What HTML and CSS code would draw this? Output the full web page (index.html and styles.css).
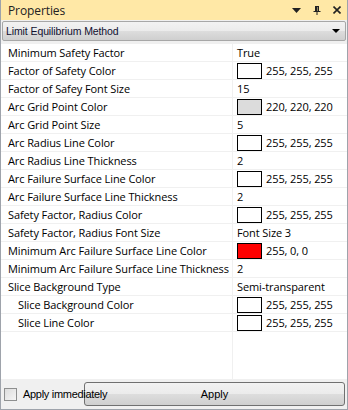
FILE: index.html
```html
<!DOCTYPE html>
<html lang="en">
<head>
    <meta charset="UTF-8">
    <title>Properties</title>
    <link rel="stylesheet" href="styles.css">
</head>
<body>
    <div class="panel">
        <!-- Title bar -->
        <div class="titlebar">
            <span class="title">Properties</span>
            <span class="tools">
                <svg width="9" height="5" viewBox="0 0 9 5"><path d="M0 0h9L4.5 5z" fill="#222"/></svg>
                <svg width="8" height="9" viewBox="0 0 8 9"><path d="M2 0.5h4M2.5 0.5v5M5.5 0.5v5M0.5 5.5h7M4 5.5v3.5" stroke="#222" fill="none"/><path d="M3 1h1.5v4H3z" fill="#222"/></svg>
                <svg width="8" height="8" viewBox="0 0 8 8"><path d="M0.5 0.5l7 7M7.5 0.5l-7 7" stroke="#222" stroke-width="1.6"/></svg>
            </span>
        </div>

        <!-- Object selector -->
        <div class="combo">
            <span>Limit Equilibrium Method</span>
            <svg width="8" height="4" viewBox="0 0 8 4"><path d="M0 0h8L4 4z" fill="#000"/></svg>
        </div>

        <!-- Property grid -->
        <div class="grid">
            <div class="row"><div class="name">Minimum Safety Factor</div><div class="value">True</div></div>
            <div class="row"><div class="name">Factor of Safety Color</div><div class="value"><span class="swatch"></span>255, 255, 255</div></div>
            <div class="row"><div class="name">Factor of Safey Font Size</div><div class="value">15</div></div>
            <div class="row"><div class="name">Arc Grid Point Color</div><div class="value"><span class="swatch gray"></span>220, 220, 220</div></div>
            <div class="row"><div class="name">Arc Grid Point Size</div><div class="value">5</div></div>
            <div class="row"><div class="name">Arc Radius Line Color</div><div class="value"><span class="swatch"></span>255, 255, 255</div></div>
            <div class="row"><div class="name">Arc Radius Line Thickness</div><div class="value">2</div></div>
            <div class="row"><div class="name">Arc Failure Surface Line Color</div><div class="value"><span class="swatch"></span>255, 255, 255</div></div>
            <div class="row"><div class="name">Arc Failure Surface Line Thickness</div><div class="value">2</div></div>
            <div class="row"><div class="name">Safety Factor, Radius Color</div><div class="value"><span class="swatch"></span>255, 255, 255</div></div>
            <div class="row"><div class="name">Safety Factor, Radius Font Size</div><div class="value">Font Size 3</div></div>
            <div class="row"><div class="name">Minimum Arc Failure Surface Line Color</div><div class="value"><span class="swatch red"></span>255, 0, 0</div></div>
            <div class="row"><div class="name">Minimum Arc Failure Surface Line Thickness</div><div class="value">2</div></div>
            <div class="row"><div class="name">Slice Background Type</div><div class="value">Semi-transparent</div></div>
            <div class="row"><div class="name sub">Slice Background Color</div><div class="value"><span class="swatch"></span>255, 255, 255</div></div>
            <div class="row"><div class="name sub">Slice Line Color</div><div class="value"><span class="swatch"></span>255, 255, 255</div></div>
            <div class="row filler"><div class="name"></div><div class="value"></div></div>
        </div>

        <!-- Footer -->
        <div class="footer">
            <label class="apply-check"><span class="box"></span>Apply immediately</label>
            <button class="apply">Apply</button>
        </div>
    </div>
</body>
</html>
```

FILE: styles.css
```css
body {
    margin: 0;
    padding: 0;
    font-family: "Open Sans", "Noto Sans", sans-serif;
    font-size: 11px;
    letter-spacing: -0.1px;
    color: #000;
}

.panel {
    width: 348px;
    height: 410px;
    box-sizing: border-box;
    border: 1px solid #9ea3ab;
    border-top: none;
    display: flex;
    flex-direction: column;
    background: #f0f0f0;
}

.titlebar {
    height: 20px;
    background: #ffe8a6;
    display: flex;
    align-items: center;
    justify-content: space-between;
    padding: 0 6px 0 7px;
}

.title {
    font-size: 12px;
    letter-spacing: -0.1px;
    color: #222;
}

.tools {
    display: flex;
    align-items: center;
    gap: 12px;
}

.combo {
    height: 18px;
    margin: 1px 1px 3px 1px;
    border: 1px solid #a7a7a7;
    border-radius: 2px;
    background: linear-gradient(to bottom, #f2f2f2 0%, #ebebeb 50%, #dddddd 51%, #cfcfcf 100%);
    display: flex;
    align-items: center;
    justify-content: space-between;
    padding: 0 5px 0 3px;
    font-family: "Liberation Sans", Arial, sans-serif;
    font-size: 10.5px;
    letter-spacing: -0.1px;
    color: #101030;
}

.grid {
    flex: 1;
    display: flex;
    flex-direction: column;
    background: #fff;
}

.row {
    display: grid;
    grid-template-columns: 232px 1fr;
    height: 17px;
    border-bottom: 1px solid #f0f0f0;
}

.name {
    padding-left: 7px;
    border-right: 1px solid #f0f0f0;
    line-height: 17px;
    white-space: nowrap;
    overflow: hidden;
}

.name.sub {
    padding-left: 17px;
}

.value {
    display: flex;
    align-items: center;
    padding-left: 4px;
    white-space: nowrap;
}

.swatch {
    width: 23px;
    height: 14px;
    border: 1px solid #000;
    background: #fff;
    margin-right: 4px;
    flex: none;
}

.swatch.gray {
    background: #dcdcdc;
}

.swatch.red {
    background: #ff0000;
}

.row.filler {
    flex: 1;
    border-bottom: none;
}

.footer {
    height: 30px;
    display: flex;
    align-items: center;
    padding: 0 2px 0 3px;
}

.apply-check {
    width: 80px;
    display: flex;
    align-items: center;
    gap: 6px;
    white-space: nowrap;
    position: relative;
    z-index: 1;
    font-family: "Liberation Sans", Arial, sans-serif;
    font-size: 11px;
    letter-spacing: -0.3px;
    color: #000;
}

.box {
    width: 11px;
    height: 11px;
    border: 1px solid #8e8f8f;
    background: linear-gradient(to bottom right, #dcdcdc, #f6f6f6);
    flex: none;
}

.apply {
    flex: 1;
    height: 24px;
    border: 1px solid #707070;
    border-radius: 3px;
    background: linear-gradient(to bottom, #f2f2f2 0%, #ebebeb 50%, #dddddd 51%, #cfcfcf 100%);
    font-family: "Liberation Sans", Arial, sans-serif;
    font-size: 11px;
    color: #000;
    padding: 0;
}
```
